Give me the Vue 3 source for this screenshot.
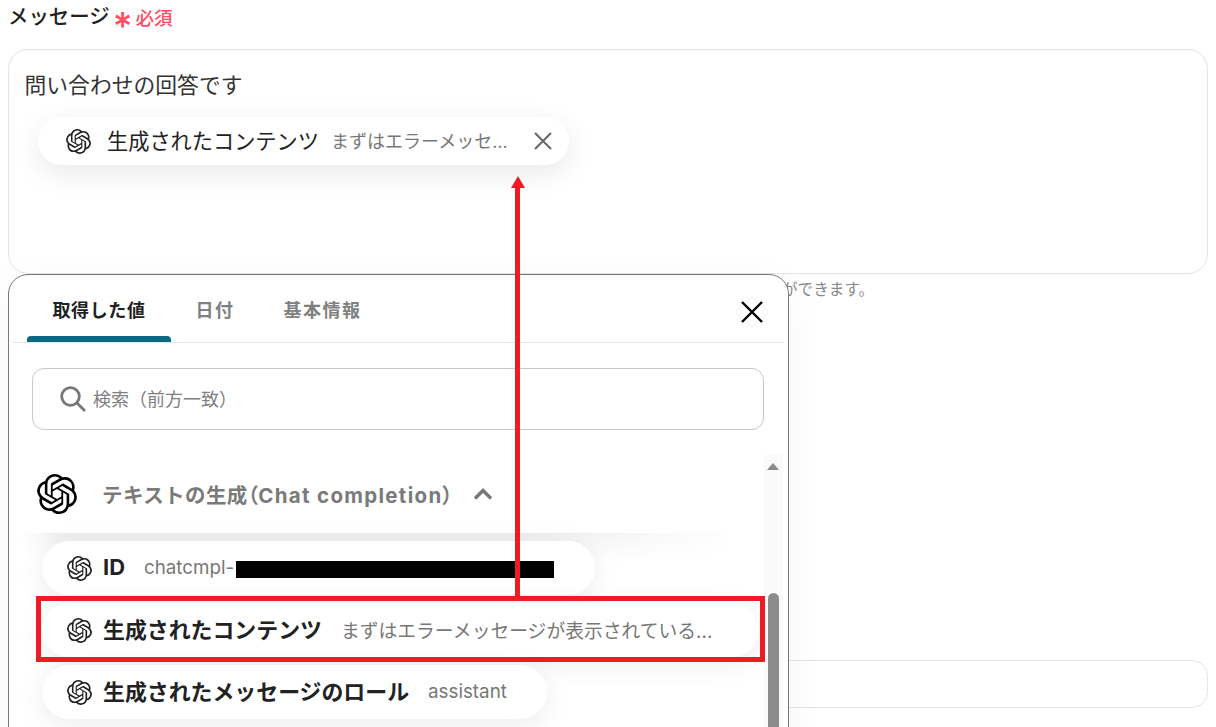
<script setup>
const logo = "M22.2819 9.8211a5.9847 5.9847 0 0 0-.5157-4.9108 6.0462 6.0462 0 0 0-6.5098-2.9A6.0651 6.0651 0 0 0 4.9807 4.1818a5.9847 5.9847 0 0 0-3.9977 2.9 6.0462 6.0462 0 0 0 .7427 7.0966 5.98 5.98 0 0 0 .511 4.9107 6.051 6.051 0 0 0 6.5146 2.9001A5.9847 5.9847 0 0 0 13.2599 24a6.0557 6.0557 0 0 0 5.7718-4.2058 5.9894 5.9894 0 0 0 3.9977-2.9001 6.0557 6.0557 0 0 0-.7475-7.0729zm-9.022 12.6081a4.4755 4.4755 0 0 1-2.8764-1.0408l.1419-.0804 4.7783-2.7582a.7948.7948 0 0 0 .3927-.6813v-6.7369l2.02 1.1686a.071.071 0 0 1 .038.052v5.5826a4.504 4.504 0 0 1-4.4945 4.4944zm-9.6607-4.1254a4.4708 4.4708 0 0 1-.5346-3.0137l.142.0852 4.783 2.7582a.7712.7712 0 0 0 .7806 0l5.8428-3.3685v2.3324a.0804.0804 0 0 1-.0332.0615L9.74 19.9502a4.4992 4.4992 0 0 1-6.1408-1.6464zM2.3408 7.8956a4.485 4.485 0 0 1 2.3655-1.9728V11.6a.7664.7664 0 0 0 .3879.6765l5.8144 3.3543-2.0201 1.1685a.0757.0757 0 0 1-.071 0l-4.8303-2.7865A4.504 4.504 0 0 1 2.3408 7.872zm16.5963 3.8558L13.1038 8.364 15.1192 7.2a.0757.0757 0 0 1 .071 0l4.8303 2.7913a4.4944 4.4944 0 0 1-.6765 8.1042v-5.6772a.79.79 0 0 0-.407-.667zm2.0107-3.0231l-.142-.0852-4.7735-2.7818a.7759.7759 0 0 0-.7854 0L9.409 9.2297V6.8974a.0662.0662 0 0 1 .0284-.0615l4.8303-2.7866a4.4992 4.4992 0 0 1 6.6802 4.66zM8.3065 12.863l-2.02-1.1638a.0804.0804 0 0 1-.038-.0567V6.0742a4.4992 4.4992 0 0 1 7.3757-3.4537l-.142.0805L8.704 5.459a.7948.7948 0 0 0-.3927.6813zm1.0976-2.3654l2.602-1.4998 2.6069 1.4998v2.9994l-2.5974 1.4997-2.6067-1.4997Z";
const rows = [
  { title: "ID", value: "chatcmpl-", width: 553, redact: true },
  { title: "生成されたコンテンツ", value: "まずはエラーメッセージが表示されている...", width: 717 },
  { title: "生成されたメッセージのロール", value: "assistant", width: 505 },
];
</script>

<template>
  <div class="page">
    <div class="label-row">
      <span class="label">メッセージ</span>
      <span class="star">*</span>
      <span class="required">必須</span>
    </div>
    <div class="editor">
      <p class="editor-text">問い合わせの回答です</p>
      <div class="tag">
        <svg class="tag-logo" viewBox="0 0 24 24"><path :d="logo" /></svg>
        <span class="tag-title">生成されたコンテンツ</span>
        <span class="tag-value">まずはエラーメッセ...</span>
        <svg class="tag-close" viewBox="0 0 20 20"><path d="M2 2 18 18M18 2 2 18" /></svg>
      </div>
    </div>
    <p class="hint">ができます。</p>
    <div class="lower-input"></div>

    <section class="popup">
      <header class="tabs">
        <span class="tab active">取得した値</span>
        <span class="tab">日付</span>
        <span class="tab">基本情報</span>
        <svg class="close" viewBox="0 0 24 24"><path d="M2 2 22 22M22 2 2 22" /></svg>
      </header>
      <div class="search">
        <svg class="search-icon" viewBox="0 0 26 26"><circle cx="10.5" cy="10.5" r="8.8" /><path d="M17 17 25 25" /></svg>
        <span class="placeholder">検索（前方一致）</span>
      </div>
      <div class="body">
        <div class="list">
          <div class="group">
            <svg class="group-logo" viewBox="0 0 24 24"><path :d="logo" /></svg>
            <span class="group-title">テキストの生成<span class="paren">（</span><span class="latin">Chat completion</span><span class="paren">）</span></span>
            <svg class="chevron" viewBox="0 0 20 12"><path d="M2 10.5 10 2.5 18 10.5" /></svg>
          </div>
          <div class="rows">
            <div v-for="row in rows" :key="row.title" class="row" :style="{ width: row.width + 'px' }">
              <svg class="row-logo" viewBox="0 0 24 24"><path :d="logo" /></svg>
              <span class="row-title">{{ row.title }}</span>
              <span class="row-value">{{ row.value }}</span>
              <span v-if="row.redact" class="redact"></span>
            </div>
          </div>
        </div>
        <div class="scrollbar">
          <span class="scroll-up"></span>
          <span class="scroll-thumb"></span>
        </div>
      </div>
    </section>

    <div class="highlight"></div>
    <div class="arrow-line"></div>
    <div class="arrow-head"></div>
  </div>
</template>

<style>
html, body { margin: 0; background: #fff; overflow: hidden; }
</style>

<style scoped>
.page {
  position: relative;
  height: 727px;
  overflow: hidden;
  padding: 0 8px;
  box-sizing: border-box;
  background: #fff;
  font-family: Inter, "Noto Sans CJK JP", sans-serif;
  color: #222;
}
.label-row { display: flex; align-items: center; height: 35px; margin-bottom: 14px; }
.label { font-size: 20.4px; line-height: 33px; padding-bottom: 2px; color: #222; font-weight: 500; }
.star { width: 22px; margin-left: 2px; text-align: center; font-size: 38px; line-height: 35px; height: 35px; color: #ff4d63; position: relative; top: 9px; font-weight: 500; }
.required { font-size: 18.5px; line-height: 35px; margin-left: 2px; color: #ff4d63; font-weight: 500; position: relative; top: 1px; }
.editor {
  height: 225px;
  box-sizing: border-box;
  border: 1px solid #e3e3e3;
  border-radius: 20px;
  padding: 19px 15.5px;
}
.editor-text { margin: 0; font-size: 21.8px; line-height: 32px; color: #333; }
.tag {
  display: flex;
  align-items: center;
  width: 531px;
  height: 48px;
  box-sizing: border-box;
  margin: 16px 0 0 13.5px;
  padding: 0 16px 0 28px;
  border-radius: 24px;
  background: #fff;
  box-shadow: 0 8px 28px rgba(0, 0, 0, .09);
}
.tag-logo { width: 25px; height: 25px; flex: none; fill: #222; }
.tag-title { margin-left: 16px; padding-bottom: 4px; font-size: 21.2px; color: #222; white-space: nowrap; }
.tag-value { margin-left: 12px; padding-bottom: 2px; font-size: 18px; color: #777; white-space: nowrap; }
.tag-close { width: 20px; height: 20px; margin-left: auto; fill: none; stroke: #666; stroke-width: 2; }
.hint { margin: 6px 0 0; height: 22px; padding-left: 774px; font-size: 15.6px; line-height: 20px; color: #888; }
.lower-input {
  margin-top: 358px;
  height: 48px;
  box-sizing: border-box;
  border: 1px solid #e6e6e6;
  border-radius: 16px;
}
.popup {
  position: absolute;
  left: 8px;
  top: 274px;
  width: 781px;
  height: 500px;
  box-sizing: border-box;
  border: 1px solid #777;
  border-radius: 20px;
  background: #fff;
  box-shadow: 0 8px 40px rgba(0, 0, 0, .04);
  display: flex;
  flex-direction: column;
  padding: 0 4px;
}
.tabs {
  display: flex;
  align-items: center;
  height: 67px;
  flex: none;
  padding-left: 14px;
  border-bottom: 1px solid #e6e6e6;
}
.tab {
  display: flex;
  align-items: center;
  justify-content: center;
  height: 67px;
  box-sizing: border-box;
  padding: 1px 24.5px 0;
  font-size: 18px;
  font-weight: 700;
  letter-spacing: 1.5px;
  color: #808080;
  white-space: nowrap;
}
.tab.active { color: #222; letter-spacing: .6px; position: relative; width: 144px; padding: 1px 0 0; }
.tab.active::after {
  content: "";
  position: absolute;
  left: 0;
  right: 0;
  bottom: 0;
  height: 6px;
  border-radius: 4px 4px 0 0;
  background: #0a6a85;
}
.close { width: 24px; height: 24px; margin: 6px 20px 0 auto; fill: none; stroke: #000; stroke-width: 2.4; }
.search {
  display: flex;
  align-items: center;
  flex: none;
  height: 62px;
  box-sizing: border-box;
  margin: 25px 20px 0 19px;
  padding-left: 27px;
  border: 1px solid #c8c8c8;
  border-radius: 12px;
}
.search-icon { width: 26px; height: 26px; flex: none; fill: none; stroke: #777; stroke-width: 2.8; }
.placeholder { margin-left: 7px; padding-bottom: 2px; font-size: 18px; color: #808080; white-space: nowrap; }
.body { flex: 1; display: flex; margin-top: 24px; min-height: 0; }
.list { flex: 1; min-width: 0; }
.group {
  position: relative;
  display: flex;
  align-items: center;
  height: 79px;
  padding-left: 24px;
}
.group::after {
  content: "";
  position: absolute;
  left: 8px;
  right: 30px;
  top: 100%;
  height: 30px;
  background: linear-gradient(to bottom, rgba(0, 0, 0, .07), rgba(0, 0, 0, 0));
  -webkit-mask-image: linear-gradient(to right, transparent, #000 6%, #000 70%, transparent);
  mask-image: linear-gradient(to right, transparent, #000 6%, #000 70%, transparent);
}
.group-logo { width: 40px; height: 40px; flex: none; fill: #000; }
.group-title { margin-left: 25px; font-size: 20.5px; letter-spacing: .4px; font-weight: 700; color: #7a7a7a; white-space: nowrap; }
.paren { font-feature-settings: "palt"; }
.latin { letter-spacing: 1.3px; }
.chevron { width: 20px; height: 12px; margin-left: 20px; fill: none; stroke: #777; stroke-width: 3.4; }
.rows { position: relative; display: flex; flex-direction: column; gap: 8px; padding: 8px 0 0 29px; }
.row {
  position: relative;
  display: flex;
  align-items: center;
  flex: none;
  height: 54px;
  box-sizing: border-box;
  padding-left: 25px;
  border-radius: 27px;
  background: #fff;
  box-shadow: 0 6px 28px rgba(0, 0, 0, .08);
}
.row-logo { width: 25px; height: 25px; flex: none; fill: #222; }
.row-title { margin-left: 11px; padding-bottom: 3px; font-size: 21.9px; font-weight: 700; color: #222; white-space: nowrap; }
.row-value { margin-left: 19px; padding-bottom: 2px; font-size: 18.8px; color: #777; white-space: nowrap; }
.redact { position: absolute; left: 194px; top: 20px; width: 318px; height: 17px; background: #000; }
.scrollbar {
  position: relative;
  flex: none;
  width: 19px;
  margin: 1px 1px 0 0;
  background: #fafafa;
}
.scroll-up {
  position: absolute;
  left: 3px;
  top: 8px;
  border-left: 6.5px solid transparent;
  border-right: 6.5px solid transparent;
  border-bottom: 7px solid #8a8a8a;
}
.scroll-thumb {
  position: absolute;
  left: 4px;
  top: 138px;
  width: 11px;
  height: 200px;
  border-radius: 6px;
  background: #8c8c8c;
}
.highlight {
  position: absolute;
  left: 36px;
  top: 596px;
  width: 729px;
  height: 66px;
  box-sizing: border-box;
  border: 5px solid #ed1c24;
}
.arrow-line { position: absolute; left: 515px; top: 188px; width: 5px; height: 408px; background: #ed1c24; }
.arrow-head {
  position: absolute;
  left: 511px;
  top: 176px;
  border-left: 7px solid transparent;
  border-right: 7px solid transparent;
  border-bottom: 12px solid #ed1c24;
}
</style>
